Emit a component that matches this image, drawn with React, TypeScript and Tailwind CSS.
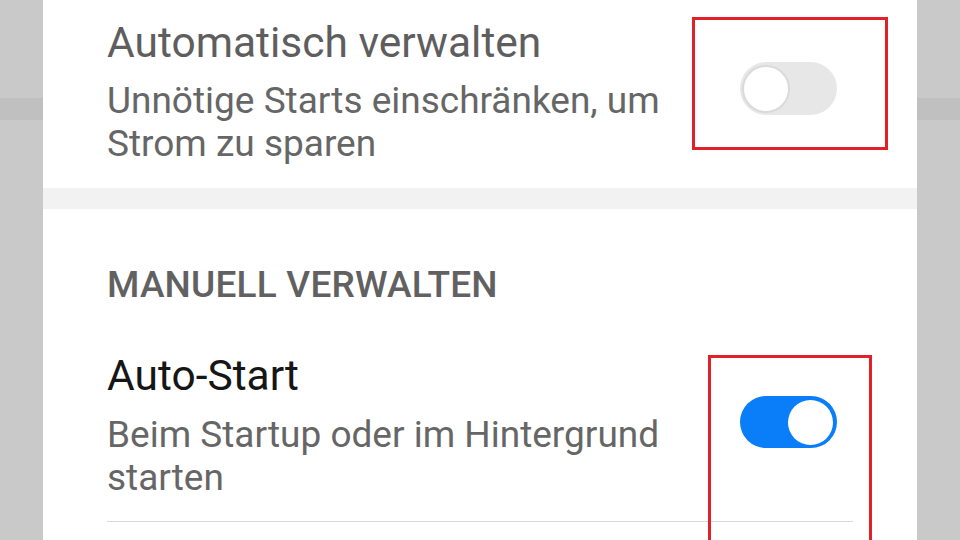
import React from 'react';

const font = { fontFamily: 'Roboto, "Noto Sans", Arial, sans-serif' };

// gray margin of the screenshot, with the faint band behind the panel edge
const SideStrip: React.FC = () => (
  <div className="w-[43px] shrink-0 flex flex-col bg-[#c9c9c9]">
    <div className="h-[98px]"></div>
    <div className="h-[22px] bg-[#c0c0c0]"></div>
    <div className="flex-1"></div>
  </div>
);

interface ToggleProps {
  on: boolean;
}

const Toggle: React.FC<ToggleProps> = ({ on }) =>
  on ? (
    <div className="w-[97px] h-[52px] rounded-full bg-[#0a7df8] flex items-center justify-end pr-[4px]">
      <div className="w-[45px] h-[45px] rounded-full bg-white"></div>
    </div>
  ) : (
    <div className="w-[97px] h-[53px] rounded-full bg-[#e7e7e7] flex items-center pl-[2px]">
      <div className="w-[48px] h-[48px] rounded-full bg-white border-2 border-[#dadada]"></div>
    </div>
  );

export default function App() {
  return (
    <div className="w-[960px] h-[540px] overflow-hidden flex bg-[#c9c9c9]" style={font}>
      <SideStrip />

      <div className="flex-1 flex flex-col bg-white">
        {/* automatic section */}
        <div className="h-[188px] flex pl-[64px] pt-[18px]">
          <div className="w-[570px]">
            <div className="text-[42.5px] leading-[50px] text-[#5e5e5e]">Automatisch verwalten</div>
            <div className="mt-[11px] text-[37px] leading-[43px] text-[#666666]">
              Unnötige Starts einschränken, um Strom zu sparen
            </div>
          </div>
          <div className="relative ml-[63px] mt-[44px] h-fit">
            <Toggle on={false} />
            <div className="absolute left-[-48px] top-[-45px] w-[196px] h-[133px] border-[3px] border-[#e1202a]"></div>
          </div>
        </div>

        <div className="h-[21px] bg-[#f2f2f2]"></div>

        {/* manual section */}
        <div className="flex-1 flex flex-col pl-[64px] pt-[54px]">
          <div className="text-[37px] leading-[44px] font-medium tracking-[0.2px] text-[#616161]">MANUELL VERWALTEN</div>
          <div className="flex mt-[44px]">
            <div className="w-[570px]">
              <div className="text-[42.5px] leading-[50px] text-[#161616]">Auto-Start</div>
              <div className="mt-[12px] text-[37px] leading-[43px] text-[#666666]">
                Beim Startup oder im Hintergrund starten
              </div>
            </div>
            <div className="relative ml-[63px] mt-[45px] h-fit">
              <Toggle on={true} />
              <div className="absolute left-[-32px] top-[-41px] w-[164px] h-[220px] border-[3px] border-[#e1202a]"></div>
            </div>
          </div>
          <div className="mt-[22px] w-[746px] h-px bg-[#d9d9d9]"></div>
        </div>
      </div>

      <SideStrip />
    </div>
  );
}
